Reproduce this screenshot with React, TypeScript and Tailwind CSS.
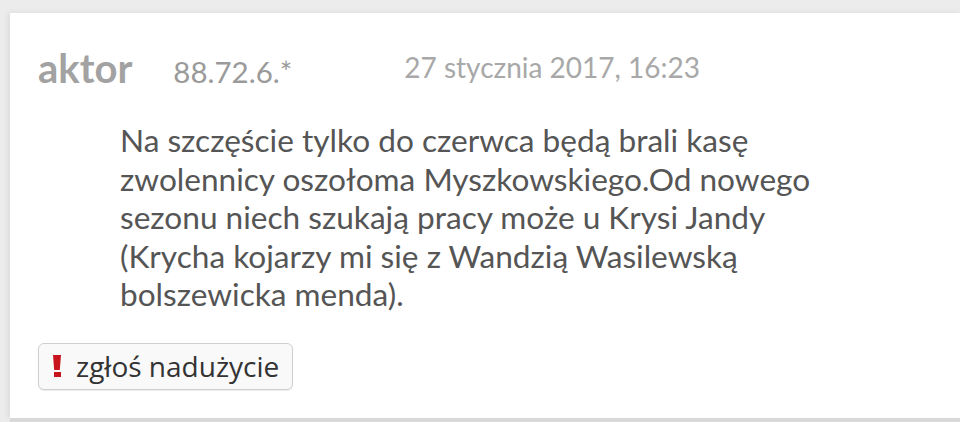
import React from "react";

export default function App() {
  const lines = [
    "Na szczęście tylko do czerwca będą brali kasę",
    "zwolennicy oszołoma Myszkowskiego.Od nowego",
    "sezonu niech szukają pracy może u Krysi Jandy",
    "(Krycha kojarzy mi się z Wandzią Wasilewską",
    "bolszewicka menda).",
  ];
  return (
    <div className="w-[960px] h-[422px] overflow-hidden bg-[#ececec] pt-[13px] pl-[10px]">
      <div className="h-[405px] bg-white shadow-[-2px_0_6px_rgba(0,0,0,0.08)] pl-[28px] pt-[35px]">
        <div className="flex items-baseline h-[40px]">
          <span className="font-['Lato',sans-serif] font-bold text-[40px] leading-[40px] text-[#a2a2a2]">aktor</span>
          <span className="ml-[41px] font-['Lato',sans-serif] text-[29.5px] leading-[40px] text-[#9a9a9a]">88.72.6.*</span>
          <span className="ml-[112px] relative -top-[5px] font-['Lato',sans-serif] text-[28px] leading-[40px] text-[#a8a8a8]">27 stycznia 2017, 16:23</span>
        </div>
        <div className="ml-[82px] mt-[33px] font-['Lato',sans-serif] text-[31.6px] leading-[38.5px] text-[#555555]">
          {lines.map((l) => (
            <div key={l} className="whitespace-nowrap">{l}</div>
          ))}
        </div>
        <div className="mt-[29px] inline-flex items-center h-[47px] pl-[14px] pr-[13px] rounded-[6px] border border-[#cfcfcf] bg-[#f9f9f9] shadow-[0_1px_1px_rgba(0,0,0,0.08)]">
          <span className="flex flex-col items-center w-[8px]" aria-label="!">
            <span className="block w-[8px] h-[15px] bg-[#c8141c] [clip-path:polygon(0_0,100%_0,85%_100%,15%_100%)]" />
            <span className="block w-[7px] h-[5px] mt-[2px] bg-[#c8141c]" />
          </span>
          <span className="ml-[15px] font-['Open_Sans',sans-serif] text-[28px] text-[#333333] leading-none">zgłoś nadużycie</span>
        </div>
      </div>
      <div className="h-[4px] bg-[#d9d9d9]" />
    </div>
  );
}
